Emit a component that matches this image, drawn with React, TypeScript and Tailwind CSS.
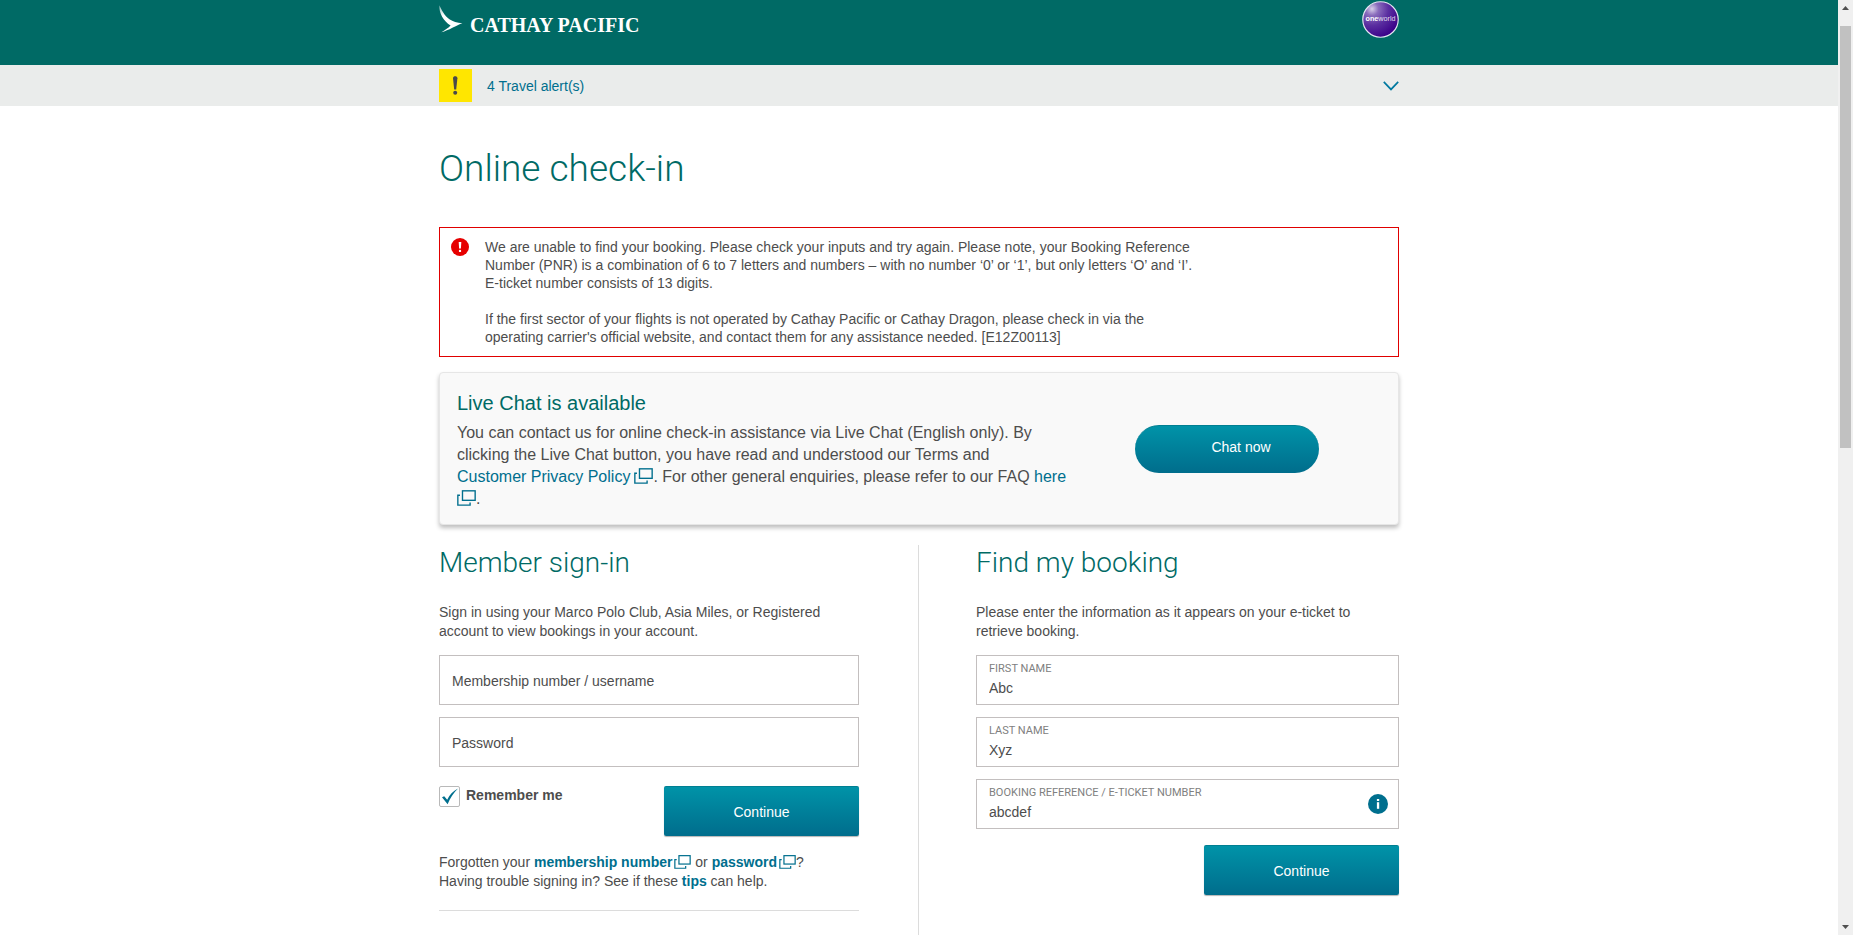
import type { ReactNode } from "react";

function BrushWing() {
  return (
    <svg viewBox="0 0 24 28" className="h-7 w-6 shrink-0" aria-hidden="true">
      <defs>
        <linearGradient id="wing" x1="0" y1="0" x2="0.35" y2="1">
          <stop offset="0" stopColor="#fff" stopOpacity="0.55" />
          <stop offset="0.4" stopColor="#fff" />
        </linearGradient>
      </defs>
      <path
        fill="url(#wing)"
        d="M0.4 0.2C2.4 4.6 5.4 10.6 10.4 14.2C14 16.6 17.8 17.6 23.4 18.3C17.6 20.2 9.6 25.6 2.4 27.2C5.8 25.4 9 23.2 11.6 20.6C4.4 15.8 0 8.4 0.4 0.2Z"
      />
    </svg>
  );
}

function OneworldBadge() {
  return (
    <svg viewBox="0 0 38 38" className="mt-px h-[37px] w-[37px]" role="img" aria-label="oneworld">
      <defs>
        <radialGradient id="globe" cx="0.26" cy="0.2" r="0.85">
          <stop offset="0" stopColor="#d9d0ea" />
          <stop offset="0.22" stopColor="#8a6cbc" />
          <stop offset="0.55" stopColor="#5a2ea0" />
          <stop offset="1" stopColor="#3a0088" />
        </radialGradient>
      </defs>
      <circle cx="19" cy="19" r="18.2" fill="url(#globe)" stroke="#e4e6f2" strokeWidth="1.2" />
      <text x="19" y="21" textAnchor="middle" fill="#fff" fontSize="7.4" fontFamily="Liberation Sans, sans-serif">
        <tspan fontWeight="700">one</tspan>
        <tspan fillOpacity="0.85">world</tspan>
      </text>
    </svg>
  );
}

function NewWindowIcon({ large = false }: { large?: boolean }) {
  return (
    <svg
      viewBox="0 0 18 15"
      className={
        large
          ? "inline-block h-4 w-[19px] align-[-2px]"
          : "inline-block h-[14px] w-[17px] align-[-2px]"
      }
      fill="none"
      stroke="#006f8e"
      strokeWidth="1.3"
      aria-hidden="true"
    >
      <rect x="5.2" y="0.7" width="12" height="9" />
      <path d="M2.8 4.9H0.8V14.2H12.4V11.8" />
    </svg>
  );
}

function NewWindowLink({ children, large, bold }: { children: ReactNode; large?: boolean; bold?: boolean }) {
  return (
    <a href="#" className={bold ? "whitespace-nowrap font-bold text-[#006f8e]" : "whitespace-nowrap text-[#006f8e]"}>
      <span className={large ? "mr-1" : "mr-0.5"}>{children}</span>
      <NewWindowIcon large={large} />
    </a>
  );
}

function ContinueButton() {
  return (
    <button
      type="submit"
      className="h-[50px] w-[195px] rounded-xs border-t border-[#007f92] bg-linear-to-b from-[#0093a8] to-[#006d8c] text-sm text-white shadow-[0_1px_1px_#b5b5b5]"
    >
      Continue
    </button>
  );
}

function PlainField({ id, label, type }: { id: string; label: string; type: string }) {
  return (
    <div className="grid h-[50px] items-center border border-[#c3bfbf]">
      <input
        id={id}
        type={type}
        placeholder=" "
        className="peer col-start-1 row-start-1 h-full w-full px-3 text-sm outline-none"
      />
      <label
        htmlFor={id}
        className="pointer-events-none invisible col-start-1 row-start-1 px-3 pt-0.5 text-sm peer-placeholder-shown:visible"
      >
        {label}
      </label>
    </div>
  );
}

function FilledField({ id, label, value, info }: { id: string; label: string; value: string; info?: boolean }) {
  return (
    <div className="flex h-[50px] items-center border border-[#c3bfbf] pr-[10px] pl-3">
      <div className="flex grow flex-col gap-0.5">
        <label htmlFor={id} className="font-[Roboto,sans-serif] text-[11px] leading-[14px] text-[#808080] uppercase">
          {label}
        </label>
        <input id={id} defaultValue={value} className="h-5 w-full text-sm outline-none" />
      </div>
      {info && (
        <button type="button" aria-label="About this field" className="h-5 w-5 shrink-0">
          <svg viewBox="0 0 20 20" className="h-5 w-5" aria-hidden="true">
            <circle cx="10" cy="10" r="10" fill="#006f8e" />
            <rect x="8.9" y="5" width="2.3" height="2" fill="#fff" />
            <path d="M8.9 8.2H11.2V14.8H8.9Z" fill="#fff" />
          </svg>
        </button>
      )}
    </div>
  );
}

function ScrollRail() {
  return (
    <div className="sticky top-0 flex h-screen w-[15px] shrink-0 flex-col items-center justify-between bg-[#f0f0f0]" aria-hidden="true">
      <div className="flex h-full w-full flex-col items-center">
        <svg viewBox="0 0 15 26" className="h-[26px] w-[15px] shrink-0">
          <path d="M4 10L7.5 6L11 10Z" fill="#505050" />
        </svg>
        <div className="h-[46%] w-[11px] bg-[#c1c1c1]" />
      </div>
      <svg viewBox="0 0 15 17" className="h-[17px] w-[15px] shrink-0">
        <path d="M4 7L7.5 11L11 7Z" fill="#505050" />
      </svg>
    </div>
  );
}

export default function App() {
  return (
    <div className="flex min-h-screen bg-white font-['Liberation_Sans',Arial,sans-serif] text-sm text-[#4d4d4d]">
      <div className="flex min-w-0 grow flex-col">
        <header className="h-[65px] bg-[#006a65]">
          <div className="mx-auto flex max-w-[960px] items-start justify-between">
            <a href="#" className="flex items-start gap-[7px] pt-[5px] text-white" aria-label="Cathay Pacific">
              <BrushWing />
              <span className="pt-2 font-['Liberation_Serif',serif] text-xl leading-6 font-bold">CATHAY PACIFIC</span>
            </a>
            <OneworldBadge />
          </div>
        </header>

        <div className="bg-[#eaeceb]">
          <button type="button" className="mx-auto flex h-[41px] w-full max-w-[960px] items-center text-[#006f8e]">
            <svg viewBox="0 0 33 33" className="h-[33px] w-[33px]" aria-hidden="true">
              <rect width="33" height="33" fill="#ffe600" />
              <path d="M14 9.2C14 6.6 18.4 6.6 18.4 9.2L17.2 20.4H15.2Z" fill="#4a4a4a" />
              <circle cx="16.2" cy="23.8" r="2" fill="#4a4a4a" />
            </svg>
            <span className="ml-[15px]">4 Travel alert(s)</span>
            <svg viewBox="0 0 16 10" className="ml-auto h-[10px] w-4" fill="none" stroke="#0079a0" strokeWidth="1.7" aria-hidden="true">
              <path d="M0.8 0.8L8 8.4L15.2 0.8" />
            </svg>
          </button>
        </div>

        <main className="mx-auto flex w-full max-w-[960px] grow flex-col">
          <h1 className="mt-10 font-[Roboto,sans-serif] text-[37px] leading-[45px] font-light text-[#006a65]">
            Online check-in
          </h1>

          <div role="alert" className="mt-9 flex gap-4 border border-[#e00000] py-[10px] pl-[11px] leading-[18px]">
            <svg viewBox="0 0 18 18" className="h-[18px] w-[18px] shrink-0" aria-hidden="true">
              <circle cx="9" cy="9" r="9" fill="#e60000" />
              <path d="M7.7 4H10.3L9.9 10.6H8.1Z" fill="#fff" />
              <circle cx="9" cy="12.9" r="1.2" fill="#fff" />
            </svg>
            <div className="max-w-[716px]">
              <p>
                We are unable to find your booking. Please check your inputs and try again. Please note, your Booking
                Reference Number (PNR) is a combination of 6 to 7 letters and numbers – with no number ‘0’ or ‘1’, but
                only letters ‘O’ and ‘I’.
                <br />
                E-ticket number consists of 13 digits.
              </p>
              <p className="mt-[18px]">
                If the first sector of your flights is not operated by Cathay Pacific or Cathay Dragon, please check in
                via the
                <br />
                operating carrier's official website, and contact them for any assistance needed. [E12Z00113]
              </p>
            </div>
          </div>

          <section className="mt-[15px] flex items-center gap-16 rounded border border-[#e6e6e6] bg-[#f9f9f9] pt-[18px] pb-[14px] pl-[17px] shadow-[0_3px_4px_rgba(0,0,0,0.25)]">
            <div className="w-[614px]">
              <h2 className="text-xl leading-6 text-[#006a65]">Live Chat is available</h2>
              <p className="mt-[7px] text-base leading-[22px]">
                You can contact us for online check-in assistance via Live Chat (English only). By clicking the Live
                Chat button, you have read and understood our Terms and{" "}
                <NewWindowLink large>Customer Privacy Policy</NewWindowLink>. For other general enquiries, please refer
                to our FAQ{" "}
                <a href="#" className="text-[#006f8e]">
                  here <br />
                  <NewWindowIcon large />
                </a>
                .
              </p>
            </div>
            <button
              type="button"
              className="mb-1 h-12 w-[184px] rounded-full border-t border-[#007f92] bg-linear-to-b from-[#0093a8] to-[#006d8c] pb-1 pl-7 text-sm text-white"
            >
              Chat now
            </button>
          </section>

          <div className="mt-5 grid grow grid-cols-2">
            <section className="border-r border-[#dcdcdc] pr-[59px]">
              <h2 className="font-[Roboto,sans-serif] text-[28px] leading-9 font-light text-[#006a65]">
                Member sign-in
              </h2>
              <p className="mt-[22px] leading-[19px]">
                Sign in using your Marco Polo Club, Asia Miles, or Registered
                <br />
                account to view bookings in your account.
              </p>
              <form className="mt-[14px] flex flex-col gap-3" onSubmit={(e) => e.preventDefault()}>
                <PlainField id="member" label="Membership number / username" type="text" />
                <PlainField id="password" label="Password" type="password" />
                <div className="mt-[7px] flex items-start justify-between">
                  <label className="grid grid-cols-[21px_auto] items-start gap-[6px] leading-[19px] font-bold">
                    <input
                      type="checkbox"
                      defaultChecked
                      className="peer col-start-1 row-start-1 h-[21px] w-[21px] appearance-none rounded-xs border border-[#b9b9b9] bg-white"
                    />
                    <svg viewBox="0 0 21 21" className="pointer-events-none invisible col-start-1 row-start-1 h-[21px] w-[21px] peer-checked:visible" aria-hidden="true">
                      <path d="M3 11.2L5.2 10.2L8.2 13.8C10.6 8.8 13.8 5.2 19 2.6C14.4 7 11.2 12 8.6 18.2Z" fill="#006f8e" />
                    </svg>
                    Remember me
                  </label>
                  <ContinueButton />
                </div>
              </form>
              <p className="mt-[17px] border-b border-[#dcdcdc] pb-[19px] leading-[19px]">
                Forgotten your <NewWindowLink bold>membership number</NewWindowLink> or{" "}
                <NewWindowLink bold>password</NewWindowLink>?
                <br />
                Having trouble signing in? See if these{" "}
                <a href="#" className="font-bold text-[#006f8e]">tips</a> can help.
              </p>
            </section>

            <section className="pl-[57px]">
              <h2 className="font-[Roboto,sans-serif] text-[28px] leading-9 font-light text-[#006a65]">
                Find my booking
              </h2>
              <p className="mt-[22px] leading-[19px]">
                Please enter the information as it appears on your e-ticket to
                <br />
                retrieve booking.
              </p>
              <form className="mt-[14px] flex flex-col gap-3" onSubmit={(e) => e.preventDefault()}>
                <FilledField id="first" label="First name" value="Abc" />
                <FilledField id="last" label="Last name" value="Xyz" />
                <FilledField id="reference" label="Booking reference / e-ticket number" value="abcdef" info />
                <div className="mt-1 flex justify-end">
                  <ContinueButton />
                </div>
              </form>
            </section>
          </div>
        </main>
      </div>
      <ScrollRail />
    </div>
  );
}
